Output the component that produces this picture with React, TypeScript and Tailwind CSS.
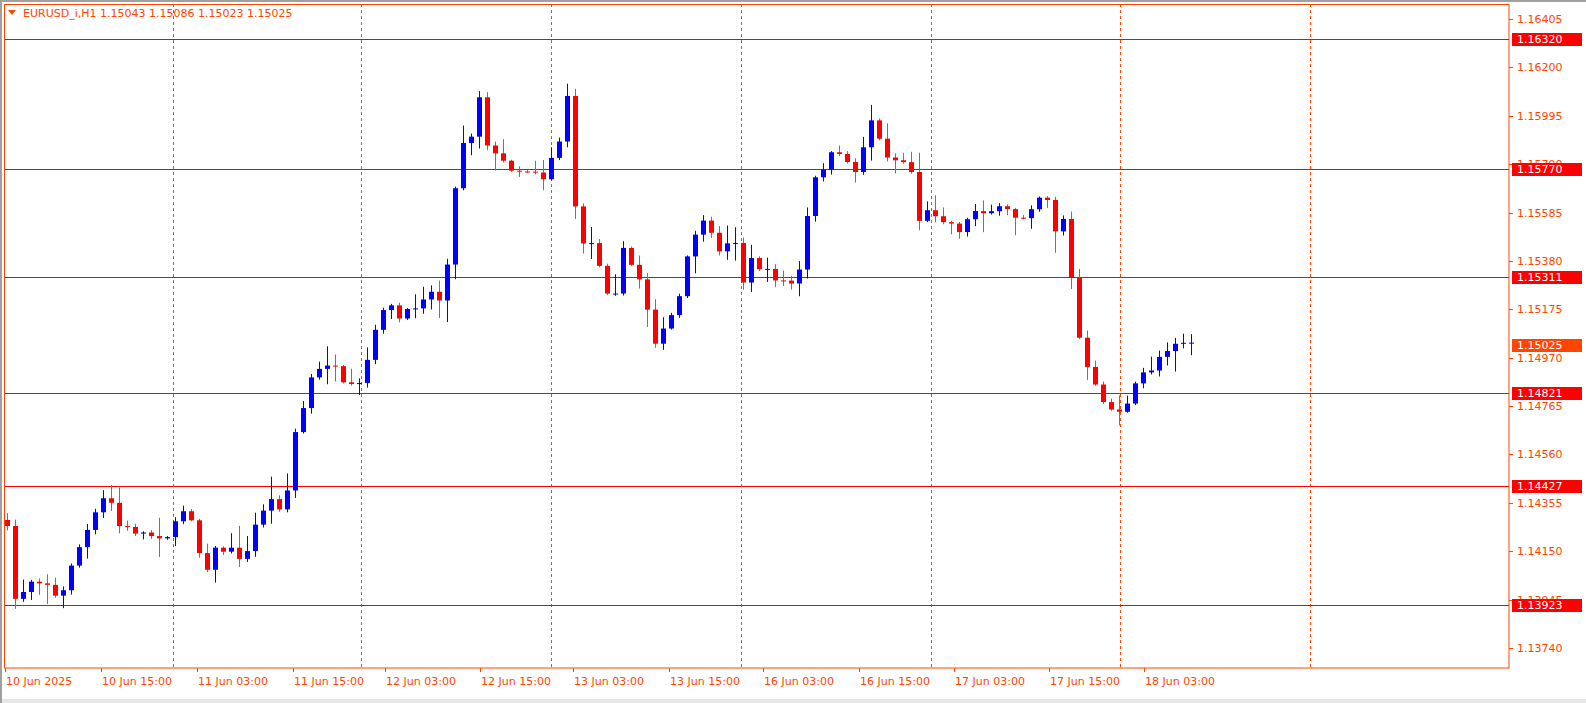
import React from "react";

const P = (p: number) => 19 + (1.16405 - p) * 23602;
const pts: [number, number][] = [[7,530],[13,600],[20,595],[30,580],[45,580],[60,605],[68,570],[80,545],[95,515],[108,490],[116,525],[130,530],[150,535],[170,535],[188,500],[195,540],[205,570],[215,550],[230,550],[245,560],[258,515],[270,500],[285,510],[292,440],[300,420],[310,380],[330,360],[345,390],[360,385],[370,350],[385,300],[400,320],[415,305],[428,290],[440,300],[448,255],[456,180],[465,130],[472,135],[480,90],[488,150],[500,160],[515,170],[540,170],[548,190],[552,145],[560,140],[567,95],[575,210],[580,240],[595,245],[605,290],[615,290],[622,250],[640,280],[655,340],[665,330],[680,295],[690,245],[700,220],[720,250],[735,240],[740,290],[750,260],[770,275],[790,285],[800,270],[808,210],[815,180],[830,155],[850,160],[858,180],[868,110],[876,135],[890,160],[900,160],[910,165],[918,220],[930,210],[945,220],[960,230],[975,210],[990,210],[1005,210],[1020,220],[1035,200],[1045,190],[1055,230],[1065,215],[1072,290],[1080,345],[1090,380],[1100,395],[1110,410],[1125,410],[1140,375],[1150,370],[1160,355],[1170,345],[1178,340],[1192,343]];
const interp = (x: number) => {
  for (let i = 0; i < pts.length - 1; i++) {
    const [x0, y0] = pts[i], [x1, y1] = pts[i + 1];
    if (x >= x0 && x <= x1) return y0 + ((y1 - y0) * (x - x0)) / (x1 - x0 || 1);
  }
  return pts[pts.length - 1][1];
};
let seed = 7;
const rnd = () => { seed = (seed * 16807) % 2147483647; return seed / 2147483647; };
const candles: { x: number; o: number; c: number; h: number; l: number }[] = [];
let prev = 520;
for (let x = 7; x <= 1192; x += 8) {
  const c = interp(x) + (rnd() - 0.5) * 8;
  const o = prev;
  const h = Math.min(o, c) - rnd() * rnd() * 22 - 1;
  const l = Math.max(o, c) + rnd() * rnd() * 22 + 1;
  candles.push({ x, o, c, h, l });
  prev = c;
}

const OR = "#ff4500";
const axis = ["1.16405","1.16200","1.15995","1.15790","1.15585","1.15380","1.15175","1.14970","1.14765","1.14560","1.14355","1.14150","1.13945","1.13740"];
const levels = ["1.16320","1.15770","1.15311","1.14821","1.14427","1.13923"];
const times = [["10 Jun 2025",5],["10 Jun 15:00",101],["11 Jun 03:00",197],["11 Jun 15:00",293],["12 Jun 03:00",385],["12 Jun 15:00",480],["13 Jun 03:00",573],["13 Jun 15:00",669],["16 Jun 03:00",763],["16 Jun 15:00",859],["17 Jun 03:00",954],["17 Jun 15:00",1049],["18 Jun 03:00",1144]] as [string, number][];
const vlines = [173, 361, 551, 741, 931, 1120, 1310];

export default function App() {
  return (
    <div className="w-[1586px] h-[703px] bg-white border-l-2 border-t-2 border-[#a0a0a0] overflow-hidden" style={{ fontFamily: "'DejaVu Sans', sans-serif" }}>
      <svg width="1586" height="703" className="block -ml-[2px] -mt-[2px]" fontFamily="DejaVu Sans, sans-serif" fontSize="11">
        <rect x="0" y="699" width="1586" height="4" fill="#e8e8e8" />
        {vlines.map((x) => <line key={x} x1={x + 0.5} y1={4} x2={x + 0.5} y2={668} stroke={OR} strokeDasharray="3 3" />)}
        {levels.map((l) => <line key={l} x1={4} y1={Math.round(P(+l)) + 0.5} x2={1509} y2={Math.round(P(+l)) + 0.5} stroke="#ff0000" />)}
        {candles.map((k, i) => {
          const up = k.c < k.o;
          const col = up ? "#0000ff" : "#ff0000";
          const top = Math.min(k.o, k.c), bot = Math.max(k.o, k.c);
          return (
            <g key={i}>
              <line x1={k.x + 0.5} y1={k.h} x2={k.x + 0.5} y2={k.l} stroke={up ? "#0000ff" : OR} />
              <rect x={k.x - 2} y={top} width={5} height={Math.max(bot - top, 1)} fill={col} />
            </g>
          );
        })}
        <rect x="4.5" y="4.5" width="1504.5" height="663.5" fill="none" stroke={OR} />
        <path d="M8 10 L16 10 L12 15 Z" fill={OR} />
        <text x="23" y="17" fill={OR}>EURUSD_i,H1  1.15043 1.15086 1.15023 1.15025</text>
        {axis.map((a) => {
          const y = Math.round(P(+a));
          return (
            <g key={a}>
              <line x1={1509} y1={y + 0.5} x2={1513} y2={y + 0.5} stroke={OR} />
              <text x="1517" y={y + 4} fill={OR}>{a}</text>
            </g>
          );
        })}
        {levels.map((l) => {
          const y = Math.round(P(+l));
          return (
            <g key={l}>
              <rect x="1512" y={y - 6} width="70" height="13" fill="#ff0000" />
              <text x="1517" y={y + 4} fill="#ffffff">{l}</text>
            </g>
          );
        })}
        <rect x="1512" y={Math.round(P(1.15025)) - 6} width="70" height="13" fill={OR} />
        <text x="1517" y={Math.round(P(1.15025)) + 4} fill="#ffffff">1.15025</text>
        {times.map(([t, x]) => (
          <g key={t}>
            <line x1={x + 0.5} y1={668} x2={x + 0.5} y2={672} stroke={OR} />
            <text x={x + 1} y="685" fill={OR}>{t}</text>
          </g>
        ))}
      </svg>
    </div>
  );
}
